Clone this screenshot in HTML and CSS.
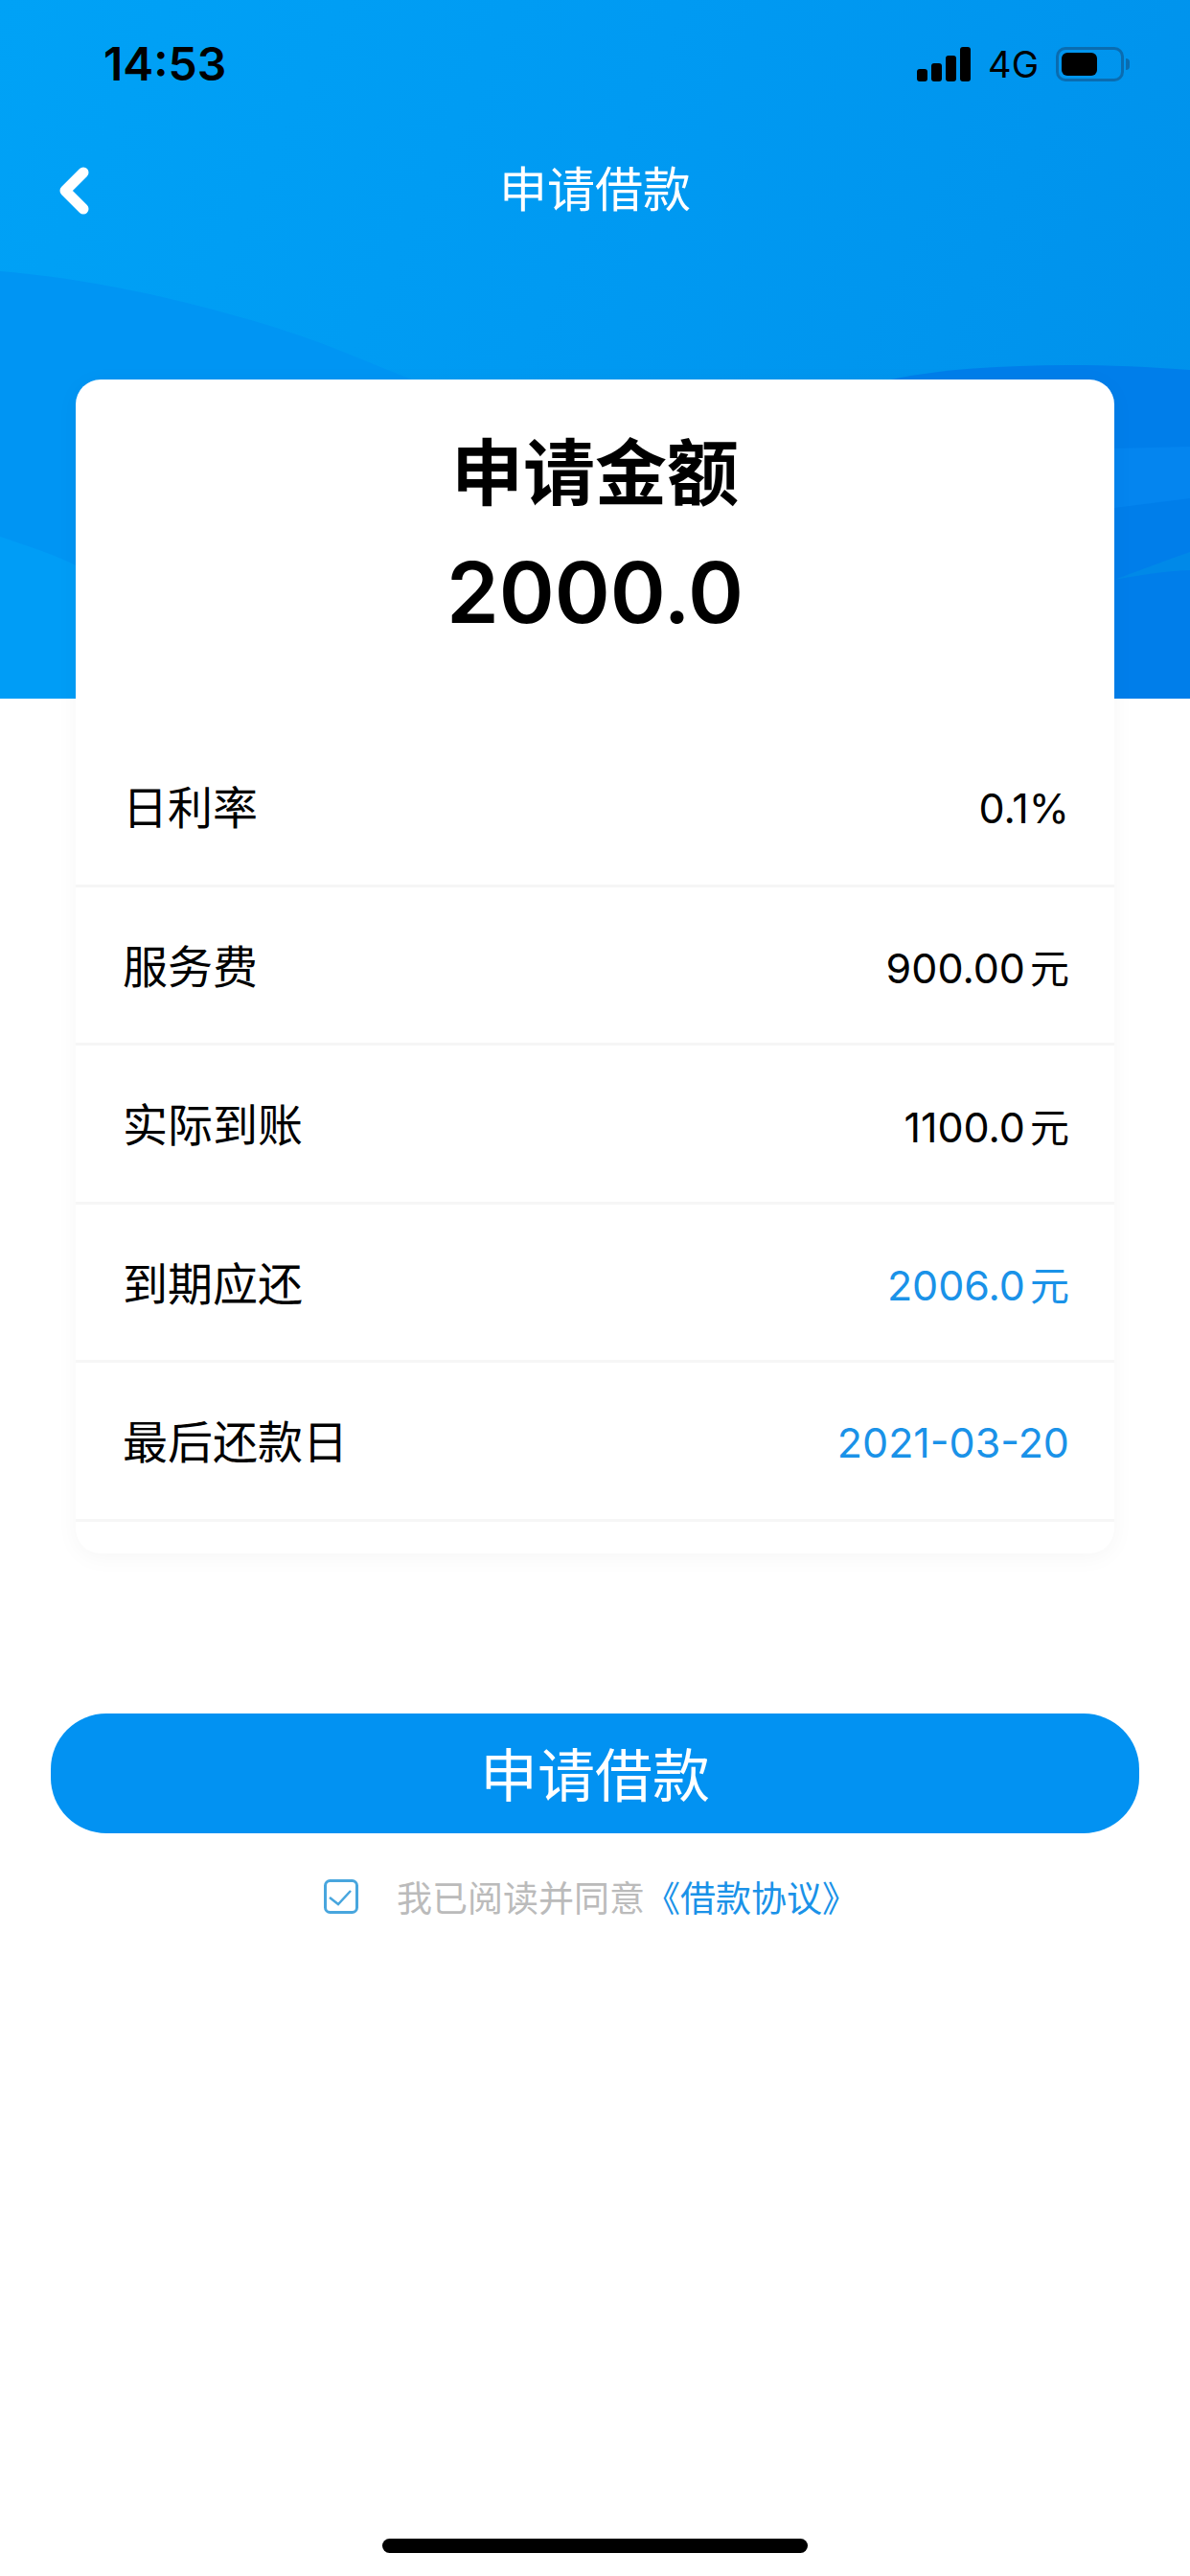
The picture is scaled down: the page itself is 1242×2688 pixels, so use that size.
FILE: index.html
```html
<!DOCTYPE html>
<html lang="zh-CN">
<head>
    <meta charset="UTF-8">
    <meta name="viewport" content="width=device-width, initial-scale=1.0">
    <title>申请借款</title>
    <link rel="stylesheet" href="styles.css">
</head>
<body>

<div class="page">
    <!-- Blue background behind the status bar, nav and top of the card -->
    <div class="hero-bg">
        <svg class="hero-waves" viewBox="0 0 1242 729" preserveAspectRatio="none">
            <path fill="#0095f3" d="M0 283 C110 292 220 320 300 346 C340 358 400 385 430 396 L700 729 L0 729 Z"/>
            <path fill="#009df6" d="M0 560 C30 570 60 580 79 590 L79 729 L0 729 Z"/>
            <path fill="#007eea" d="M930 396 C1020 378 1140 378 1242 386 L1242 729 L900 729 Z"/>
            <path fill="#0485ef" d="M1163 468 L1242 466 L1242 520 L1163 530 Z"/>
            <path fill="#0089e8" d="M1163 605 C1190 595 1215 585 1242 576 L1242 595 C1215 596 1190 600 1163 605 Z"/>
        </svg>
    </div>

    <div class="status-bar">
        <span class="status-time">14:53</span>
        <div class="status-right">
            <div class="signal">
                <span class="bar bar-1"></span>
                <span class="bar bar-2"></span>
                <span class="bar bar-3"></span>
                <span class="bar bar-4"></span>
            </div>
            <span class="network">4G</span>
            <div class="battery">
                <div class="battery-body"><div class="battery-level"></div></div>
                <div class="battery-nub"></div>
            </div>
        </div>
    </div>

    <div class="nav-bar">
        <svg class="back-icon" viewBox="0 0 34 50">
            <path d="M27 6 L8 25 L27 44" fill="none" stroke="#fff" stroke-width="11" stroke-linecap="round" stroke-linejoin="round"/>
        </svg>
        <span class="nav-title">申请借款</span>
    </div>

    <div class="card">
        <div class="card-head">
            <div class="amount-label">申请金额</div>
            <div class="amount-value">2000.0</div>
        </div>
        <div class="row">
            <span class="row-label">日利率</span>
            <span class="row-value">0.1%</span>
        </div>
        <div class="row">
            <span class="row-label">服务费</span>
            <span class="row-value">900.00<span class="unit">元</span></span>
        </div>
        <div class="row">
            <span class="row-label">实际到账</span>
            <span class="row-value">1100.0<span class="unit">元</span></span>
        </div>
        <div class="row">
            <span class="row-label">到期应还</span>
            <span class="row-value blue">2006.0<span class="unit">元</span></span>
        </div>
        <div class="row">
            <span class="row-label">最后还款日</span>
            <span class="row-value blue">2021-03-20</span>
        </div>
    </div>

    <button class="apply-button">申请借款</button>

    <div class="agreement">
        <svg class="check-icon" viewBox="0 0 36 36">
            <rect x="1.5" y="1.5" width="33" height="33" rx="5" fill="none" stroke="#48a6de" stroke-width="3"/>
            <path d="M6 19 L15 26 L28 12" fill="none" stroke="#48a6de" stroke-width="2.5"/>
        </svg>
        <span class="agreement-text">我已阅读并同意<a class="agreement-link">《借款协议》</a></span>
    </div>

    <div class="home-bar"></div>
</div>

</body>
</html>
```

FILE: styles.css
```css
body {
    margin: 0;
    padding: 0;
    background-color: #fff;
    font-family: "Noto Sans CJK SC", Inter, sans-serif;
    color: #000;
}

.page {
    position: relative;
    width: 1242px;
    height: 2688px;
    display: flex;
    flex-direction: column;
    overflow: hidden;
}

.hero-bg {
    position: absolute;
    top: 0;
    left: 0;
    width: 100%;
    height: 729px;
    background: linear-gradient(115deg, #00a2f6 0%, #009af2 45%, #0090ea 100%);
}

.hero-waves {
    display: block;
    width: 100%;
    height: 100%;
}

/* status bar */
.status-bar {
    position: relative;
    height: 134px;
    padding: 0 63px 0 108px;
    display: flex;
    justify-content: space-between;
    align-items: flex-start;
}

.status-time {
    margin-top: 36px;
    font-family: Inter, sans-serif;
    font-size: 48px;
    font-weight: 600;
    line-height: 62px;
}

.status-right {
    margin-top: 49px;
    display: flex;
    align-items: center;
    height: 36px;
}

.signal {
    display: flex;
    align-items: flex-end;
    gap: 4px;
    height: 36px;
}

.bar {
    width: 11px;
    background-color: #000;
    border-radius: 3px;
}

.bar-1 { height: 13px; }
.bar-2 { height: 19px; }
.bar-3 { height: 27px; }
.bar-4 { height: 36px; }

.network {
    margin-left: 18px;
    font-family: Inter, sans-serif;
    font-size: 38px;
    line-height: 36px;
}

.battery {
    margin-left: 18px;
    display: flex;
    align-items: center;
}

.battery-body {
    box-sizing: border-box;
    width: 71px;
    height: 36px;
    border: 3px solid #0a6cb0;
    border-radius: 10px;
    padding: 3px;
}

.battery-level {
    width: 37px;
    height: 24px;
    background-color: #000;
    border-radius: 6px;
}

.battery-nub {
    margin-left: 2px;
    width: 4px;
    height: 12px;
    background-color: #0a6cb0;
    border-radius: 0 4px 4px 0;
}

/* nav */
.nav-bar {
    position: relative;
    height: 262px;
    box-sizing: border-box;
    display: flex;
    justify-content: center;
}

.nav-title {
    margin-top: 25px;
    font-size: 50px;
    line-height: 70px;
    color: #fff;
}

.back-icon {
    position: absolute;
    left: 60px;
    top: 40px;
    width: 34px;
    height: 50px;
}

/* card */
.card {
    position: relative;
    box-sizing: border-box;
    width: 1084px;
    height: 1225px;
    margin: 0 79px;
    background-color: #fff;
    border-radius: 26px;
    box-shadow: 0 4px 24px rgba(0, 0, 0, 0.04);
}

.card-head {
    height: 364px;
    box-sizing: border-box;
    padding-top: 43px;
    text-align: center;
}

.amount-label {
    font-size: 75px;
    font-weight: 700;
    line-height: 100px;
}

.amount-value {
    margin-top: 23px;
    font-family: Inter, sans-serif;
    font-size: 88px;
    font-weight: 600;
    line-height: 112px;
}

.row {
    box-sizing: border-box;
    height: 165.5px;
    padding: 0 47px 0 49px;
    display: flex;
    justify-content: space-between;
    align-items: center;
    border-bottom: 3px solid #f6f6f6;
}

.row-label {
    margin-bottom: 3px;
    font-size: 47px;
}

.row-value {
    margin-top: 3px;
    font-family: Inter, "Noto Sans CJK SC", sans-serif;
    font-size: 43px;
}

.unit {
    margin-left: 5px;
    font-family: "Noto Sans CJK SC", sans-serif;
    font-size: 41px;
}

.blue {
    color: #1a92e8;
}

/* button and agreement */
.apply-button {
    display: block;
    width: 1136px;
    height: 125px;
    margin: 167px 53px 0;
    padding: 0 0 5px;
    border: none;
    border-radius: 58px;
    background-color: #0292f2;
    color: #fff;
    font-family: "Noto Sans CJK SC", sans-serif;
    font-size: 60px;
}

.agreement {
    margin: 48px 0 0 338px;
    display: flex;
    align-items: center;
    height: 36px;
}

.check-icon {
    width: 36px;
    height: 36px;
}

.agreement-text {
    margin-left: 40px;
    font-size: 37px;
    color: #bbb;
}

.agreement-link {
    color: #1a92e8;
}

.home-bar {
    position: absolute;
    left: 399px;
    bottom: 24px;
    width: 444px;
    height: 15px;
    background-color: #000;
    border-radius: 8px;
}
```
